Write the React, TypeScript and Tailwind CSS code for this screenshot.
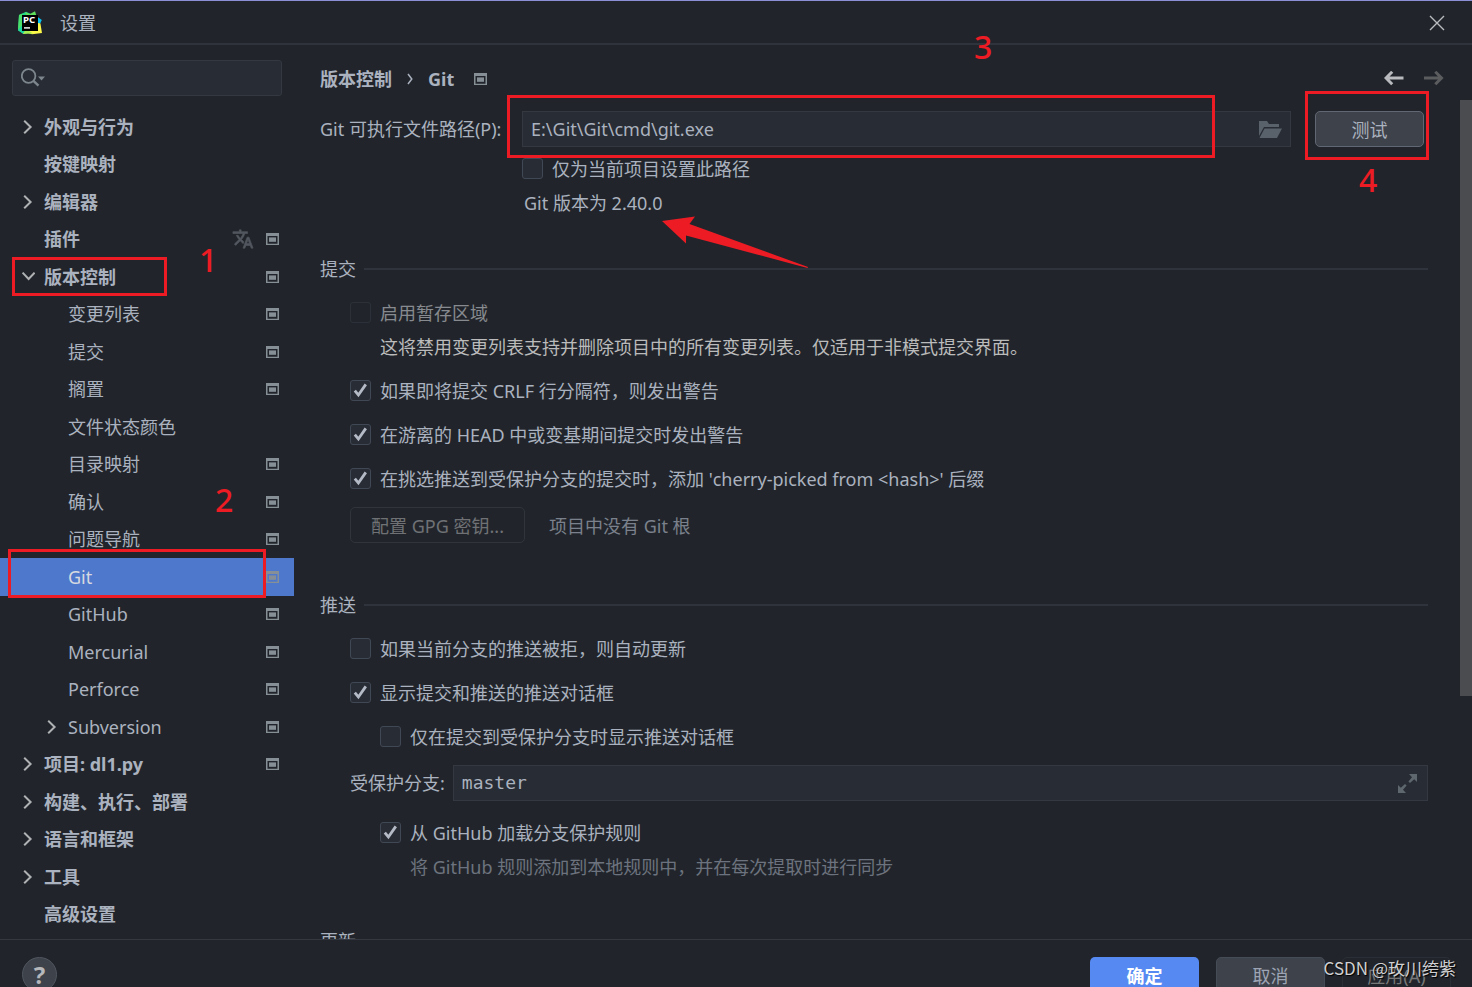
import { useState } from 'react';
import type { ReactNode } from 'react';

type TreeItem = {
  label: string;
  level: 0 | 1;
  arrow?: 'right' | 'down';
  scoped?: boolean;
  translate?: boolean;
  selected?: boolean;
  mark?: 'box-parent' | 'box-child';
};

const tree: TreeItem[] = [
  { label: '外观与行为', level: 0, arrow: 'right' },
  { label: '按键映射', level: 0 },
  { label: '编辑器', level: 0, arrow: 'right' },
  { label: '插件', level: 0, scoped: true, translate: true },
  { label: '版本控制', level: 0, arrow: 'down', scoped: true, mark: 'box-parent' },
  { label: '变更列表', level: 1, scoped: true },
  { label: '提交', level: 1, scoped: true },
  { label: '搁置', level: 1, scoped: true },
  { label: '文件状态颜色', level: 1 },
  { label: '目录映射', level: 1, scoped: true },
  { label: '确认', level: 1, scoped: true },
  { label: '问题导航', level: 1, scoped: true },
  { label: 'Git', level: 1, scoped: true, selected: true, mark: 'box-child' },
  { label: 'GitHub', level: 1, scoped: true },
  { label: 'Mercurial', level: 1, scoped: true },
  { label: 'Perforce', level: 1, scoped: true },
  { label: 'Subversion', level: 1, arrow: 'right', scoped: true },
  { label: '项目: dl1.py', level: 0, arrow: 'right', scoped: true },
  { label: '构建、执行、部署', level: 0, arrow: 'right' },
  { label: '语言和框架', level: 0, arrow: 'right' },
  { label: '工具', level: 0, arrow: 'right' },
  { label: '高级设置', level: 0 },
];

function ScopeIcon() {
  return (
    <svg className="h-3 w-[13px] shrink-0" viewBox="0 0 13 12" fill="#868f96" aria-hidden="true">
      <path fillRule="evenodd" d="M0 0H13V12H0ZM1.5 3V10.8H11.5V3Z" />
      <rect x="3" y="4.4" width="7" height="4.4" />
    </svg>
  );
}

function Chevron({ dir }: { dir: 'right' | 'down' }) {
  return dir === 'right' ? (
    <svg className="h-[14px] w-[14px]" viewBox="0 0 14 14" fill="none" stroke="#afb1b3" strokeWidth="2" aria-hidden="true">
      <path d="M3.2 0.8L9.6 7L3.2 13.2" />
    </svg>
  ) : (
    <svg className="h-[14px] w-[14px]" viewBox="0 0 14 14" fill="none" stroke="#afb1b3" strokeWidth="2" aria-hidden="true">
      <path d="M1.6 2.6L7.6 9L13.6 2.6" />
    </svg>
  );
}

function PyCharmLogo() {
  return (
    <svg className="h-6 w-6" viewBox="0 0 24 24" aria-hidden="true">
      <path d="M1 4L8 0.8L13 3L9 12L5 22.5L0 19.5Z" fill="#21d789" />
      <path d="M1 4L4.5 2.4L4.5 14L0 19Z" fill="#4ce06a" />
      <path d="M7 1.2L12 3L17 0.2L18.5 5L10 8Z" fill="#5fdf5a" />
      <path d="M0 19L5 14L12 22L5 22.8Z" fill="#1fd6a0" />
      <path d="M19 5.5L23.8 9L21.5 14L18 12Z" fill="#07c3f2" />
      <path d="M5 22.7L10 18L20 12L22.4 12.6L24 22L14 23.2L10 22Z" fill="#fcf84a" />
      <path d="M5 22.7L8 18L15 22.5Z" fill="#a6ee50" />
      <rect x="4" y="4" width="16" height="16" fill="#000" />
      <rect x="6" y="16.2" width="6" height="1.4" fill="#fff" />
      <text x="5" y="12.4" fontSize="9.6" fontWeight="700" fill="#fff" fontFamily="Noto Sans, sans-serif">PC</text>
    </svg>
  );
}

function Check({
  id,
  label,
  checked = false,
  disabled = false,
}: {
  id: string;
  label: string;
  checked?: boolean;
  disabled?: boolean;
}) {
  const [on, setOn] = useState(checked);
  return (
    <div className="flex h-6 items-start gap-[9px]">
      <span className="mt-px grid h-[21px] w-[21px] shrink-0">
        <input
          id={id}
          type="checkbox"
          checked={on}
          disabled={disabled}
          onChange={(e) => setOn(e.target.checked)}
          className="col-start-1 row-start-1 h-[21px] w-[21px] appearance-none rounded-[3px] border border-[#414855] bg-[#282c34] disabled:border-[#2c3038] disabled:bg-transparent"
        />
        {on && (
          <svg className="pointer-events-none col-start-1 row-start-1 h-[21px] w-[21px]" viewBox="0 0 21 21" fill="none" stroke="#b4bac6" strokeWidth="2.8" aria-hidden="true">
            <path d="M4.8 10.6L8.4 15L15.8 4.4" />
          </svg>
        )}
      </span>
      <label htmlFor={id} className={disabled ? 'text-[#878a8f]' : ''}>
        {label}
      </label>
    </div>
  );
}

function Section({ title, children }: { title: string; children?: ReactNode }) {
  return (
    <section>
      <div className="flex h-6 items-center gap-2">
        <h2>{title}</h2>
        <span className="h-[2px] flex-1 bg-[#2f333c]" />
      </div>
      {children}
    </section>
  );
}

function Mark({ className }: { className: string }) {
  return <span aria-hidden="true" className={`pointer-events-none absolute z-10 border-3 border-[#ed1c24] ${className}`} />;
}

function Digit({ n, className }: { n: number; className: string }) {
  return (
    <span className={`pointer-events-none absolute z-10 text-[32px] leading-8 font-medium text-[#ed1c24] ${className}`}>
      {n}
    </span>
  );
}

function TreeRow({ item }: { item: TreeItem }) {
  return (
    <li className={`relative flex min-h-0 flex-1 items-center pr-[15px] ${item.selected ? 'bg-[#4d78cc]' : ''}`}>
      <span className={`flex shrink-0 justify-end pr-[9px] ${item.level === 0 ? 'w-11' : 'w-[68px]'}`}>
        {item.arrow && <Chevron dir={item.arrow} />}
      </span>
      <a
        href="#settings"
        className={`flex-1 whitespace-nowrap ${item.level === 0 ? 'font-bold' : ''} ${item.selected ? 'text-[#d7dae0]' : ''}`}
      >
        {item.label}
      </a>
      {item.translate && (
        <svg className="mr-3 h-[22px] w-[22px]" viewBox="0 0 24 24" fill="#535860" stroke="#535860" strokeWidth="0.7" aria-hidden="true">
          <path d="M12.87 15.07l-2.54-2.51.03-.03A17.52 17.52 0 0 0 14.07 6H17V4h-7V2H8v2H1v1.99h11.17C11.5 7.92 10.44 9.75 9 11.35 8.07 10.32 7.3 9.19 6.69 8h-2c.73 1.63 1.73 3.17 2.98 4.56l-5.09 5.02L4 19l5-5 3.11 3.11.76-2.04zM18.5 10h-2L12 22h2l1.12-3h4.75L21 22h2l-4.5-12zm-2.62 7l1.62-4.33L19.12 17h-3.24z" />
        </svg>
      )}
      {item.scoped && <ScopeIcon />}
      {item.mark === 'box-parent' && <Mark className="-top-px left-3 h-[39px] w-[155px]" />}
      {item.mark === 'box-child' && <Mark className="-top-[9px] left-2 h-[49px] w-[258px]" />}
    </li>
  );
}

export default function App() {
  const [path, setPath] = useState('E:\\Git\\Git\\cmd\\git.exe');
  const [branches, setBranches] = useState('master');

  return (
    <div className="flex h-screen flex-col overflow-hidden border-t border-[#8d8fd6] bg-[#21252b] font-['Noto_Sans','Noto_Sans_CJK_SC',sans-serif] text-[18px] leading-6 text-[#abb2bf]">
      <header className="relative flex h-11 shrink-0 items-center border-b-2 border-[#2f333c] pt-[2px] pr-[27px] pl-[18px]">
        <PyCharmLogo />
        <h1 className="ml-[18px] flex-1">设置</h1>
        <button type="button" aria-label="关闭">
          <svg className="h-4 w-4" viewBox="0 0 16 16" fill="none" stroke="#b9bbbe" strokeWidth="1.4" aria-hidden="true">
            <path d="M1 1L15 15M15 1L1 15" />
          </svg>
        </button>
        <Digit n={3} className="top-[30px] left-[974px]" />
      </header>

      <div className="flex min-h-0 flex-1 overflow-hidden">
        <aside className="relative flex w-[294px] shrink-0 flex-col pb-[6px]">
          <div className="mx-3 mt-[15px] mb-3 flex h-9 shrink-0 items-center rounded-[3px] border border-[#333841] bg-[#282c34] pl-2">
            <svg className="h-5 w-6" viewBox="0 0 24 20" fill="none" stroke="#7d868d" strokeWidth="1.8" aria-hidden="true">
              <circle cx="7.6" cy="8" r="6.8" />
              <path d="M12.4 12.8L17.5 17.6" strokeWidth="2.4" />
              <path d="M17 8.4H24L20.5 12.6Z" fill="#7d868d" stroke="none" />
            </svg>
            <input type="search" aria-label="搜索设置" className="min-w-0 flex-1 bg-transparent px-2 outline-none" />
          </div>
          <ul className="flex min-h-0 flex-1 flex-col">
            {tree.map((item) => (
              <TreeRow key={item.label} item={item} />
            ))}
          </ul>
          <Digit n={1} className="top-[199px] left-[199px]" />
          <Digit n={2} className="top-[439px] left-[215px]" />
        </aside>

        <main className="flex min-w-0 flex-1 flex-col">
          <div className="flex h-[55px] shrink-0 items-center pt-[13px] pr-7 pl-[26px] font-bold">
            <span>版本控制</span>
            <svg className="mx-[15px] h-3 w-[6px]" viewBox="0 0 6 12" fill="none" stroke="#abb2bf" strokeWidth="1.5" aria-hidden="true">
              <path d="M1 1L4.8 6L1 11" />
            </svg>
            <span className="mr-5">Git</span>
            <ScopeIcon />
            <span className="flex-1" />
            <button type="button" aria-label="后退" className="mr-5">
              <svg className="h-4 w-5" viewBox="0 0 20 16" fill="none" stroke="#b8babd" strokeWidth="3" aria-hidden="true">
                <path d="M19.5 7H2M8.2 0.8L2 7L8.2 13.2" />
              </svg>
            </button>
            <button type="button" aria-label="前进" disabled>
              <svg className="h-4 w-5" viewBox="0 0 20 16" fill="none" stroke="#5b5c5e" strokeWidth="3" aria-hidden="true">
                <path d="M0 7H17.5M11.3 0.8L17.5 7L11.3 13.2" />
              </svg>
            </button>
          </div>

          <div className="flex min-h-0 flex-1">
            <div className="min-w-0 flex-1 pt-[11px] pr-8 pl-[26px]">
              <div className="grid grid-cols-[202px_1fr] gap-y-[10px]">
                <label htmlFor="git-path" className="self-center whitespace-nowrap">
                  Git 可执行文件路径(P):
                </label>
                <div className="flex gap-6 pr-1">
                  <div className="relative flex h-9 min-w-0 flex-1 items-center border border-[#333841] bg-[#282c34] pr-2 pl-2">
                    <input
                      id="git-path"
                      value={path}
                      onChange={(e) => setPath(e.target.value)}
                      className="min-w-0 flex-1 bg-transparent outline-none"
                    />
                    <button type="button" aria-label="浏览">
                      <svg className="h-[17px] w-[23px]" viewBox="0 0 23 17" fill="#59616a" aria-hidden="true">
                        <path d="M0 0H8L10 3H20V6H5L0 15Z" />
                        <path d="M5.5 7.6H23L18 17H0.5Z" />
                      </svg>
                    </button>
                    <Mark className="-top-[17px] right-[75px] -left-4 h-[63px]" />
                  </div>
                  <div className="relative">
                    <button
                      type="button"
                      className="h-9 w-[109px] rounded-[5px] border border-[#616873] bg-[#3d424b] pt-[2px]"
                    >
                      测试
                    </button>
                    <Mark className="-top-5 -right-[5px] -left-[10px] h-[69px]" />
                    <Digit n={4} className="top-[53px] left-[44px]" />
                  </div>
                </div>
                <div className="col-start-2">
                  <Check id="project-only" label="仅为当前项目设置此路径" />
                </div>
                <p className="relative col-start-2 pl-[2px]">
                  Git 版本为 2.40.0
                  <svg className="pointer-events-none absolute top-[25px] left-[140px] z-10 h-[53px] w-[148px]" viewBox="0 0 148 53" fill="#ed1c24" aria-hidden="true">
                    <path d="M0 5L33 0.5L27.5 8L146 51L145.5 52L24 19.5V27.5Z" />
                  </svg>
                </p>
              </div>

              <div className="mt-[42px] flex flex-col gap-[50px]">
                <Section title="提交">
                  <div className="mt-5 flex flex-col gap-5 pl-[30px]">
                    <div className="flex flex-col gap-[10px]">
                      <Check id="staging" label="启用暂存区域" disabled />
                      <p className="pl-[30px] text-[#bbbbbb]">
                        这将禁用变更列表支持并删除项目中的所有变更列表。仅适用于非模式提交界面。
                      </p>
                    </div>
                    <Check id="crlf" label="如果即将提交 CRLF 行分隔符，则发出警告" checked />
                    <Check id="head" label="在游离的 HEAD 中或变基期间提交时发出警告" checked />
                    <Check id="cherry" label="在挑选推送到受保护分支的提交时，添加 'cherry-picked from <hash>' 后缀" checked />
                  </div>
                  <div className="mt-4 flex items-center gap-6 pl-[30px]">
                    <button type="button" disabled className="h-9 w-[175px] rounded-[5px] border border-[#30343c] pt-[2px] text-[#6f7175]">
                      配置 GPG 密钥...
                    </button>
                    <span className="pt-[2px] text-[#7b818c]">项目中没有 Git 根</span>
                  </div>
                </Section>

                <Section title="推送">
                  <div className="mt-5 flex flex-col gap-5 pl-[30px]">
                    <Check id="auto-update" label="如果当前分支的推送被拒，则自动更新" />
                    <Check id="push-dialog" label="显示提交和推送的推送对话框" checked />
                    <div className="pl-[30px]">
                      <Check id="protected-only" label="仅在提交到受保护分支时显示推送对话框" />
                    </div>
                  </div>
                  <div className="mt-4 flex items-center gap-2 pl-[30px]">
                    <label htmlFor="protected" className="whitespace-nowrap">
                      受保护分支:
                    </label>
                    <div className="flex h-9 min-w-0 flex-1 items-center border border-[#333841] bg-[#282c34] pr-[10px] pl-2">
                      <input
                        id="protected"
                        value={branches}
                        onChange={(e) => setBranches(e.target.value)}
                        className="min-w-0 flex-1 bg-transparent font-['DejaVu_Sans_Mono',monospace] outline-none"
                      />
                      <button type="button" aria-label="展开">
                        <svg className="h-[19px] w-[19px]" viewBox="0 0 19 19" fill="#5e666e" aria-hidden="true">
                          <path d="M11 0H19V8L16.2 5.2L12 9L10.4 7.4L14 3.2Z" />
                          <path d="M0 11L2.8 13.8L7 10L8.6 11.6L5 15.8L8 19H0Z" />
                        </svg>
                      </button>
                    </div>
                  </div>
                  <div className="mt-5 flex flex-col gap-[10px] pl-[60px]">
                    <Check id="github-rules" label="从 GitHub 加载分支保护规则" checked />
                    <p className="pl-[30px] text-[#6d737e]">将 GitHub 规则添加到本地规则中，并在每次提取时进行同步</p>
                  </div>
                </Section>

                <Section title="更新" />
              </div>
            </div>
            <div className="w-3 shrink-0">
              <div className="h-[71%] bg-[#4a4c50]" />
            </div>
          </div>
        </main>
      </div>

      <footer className="relative flex h-12 shrink-0 items-start overflow-hidden border-t border-[#333841] bg-[#21252b] pt-[17px] pr-[21px] pl-[22px]">
        <button
          type="button"
          aria-label="帮助"
          className="h-[35px] w-[35px] shrink-0 rounded-full border border-[#50565f] bg-[#3d424b] text-[24px] leading-8 font-bold text-[#b5b7ba]"
        >
          ?
        </button>
        <div className="flex flex-1 justify-end gap-[17px]">
          <button type="button" className="h-9 w-[109px] shrink-0 rounded-[5px] bg-[#568af2] pt-[2px] font-bold text-white">
            确定
          </button>
          <button type="button" className="h-9 w-[109px] shrink-0 rounded-[5px] border border-[#464c56] bg-[#3d424b] pt-[2px] text-[#9da5b4]">
            取消
          </button>
          <button type="button" disabled className="h-9 w-[109px] shrink-0 rounded-[5px] border border-[#2a2e36] pt-[2px] text-[#777777]">
            应用(A)
          </button>
        </div>
        <span className="pointer-events-none absolute top-4 right-4 z-10 font-['Noto_Sans_CJK_SC',sans-serif] text-[17px] text-[#d0d0d2] [text-shadow:1px_1px_1px_#000]">
          CSDN @玫川绔紫
        </span>
      </footer>
    </div>
  );
}
